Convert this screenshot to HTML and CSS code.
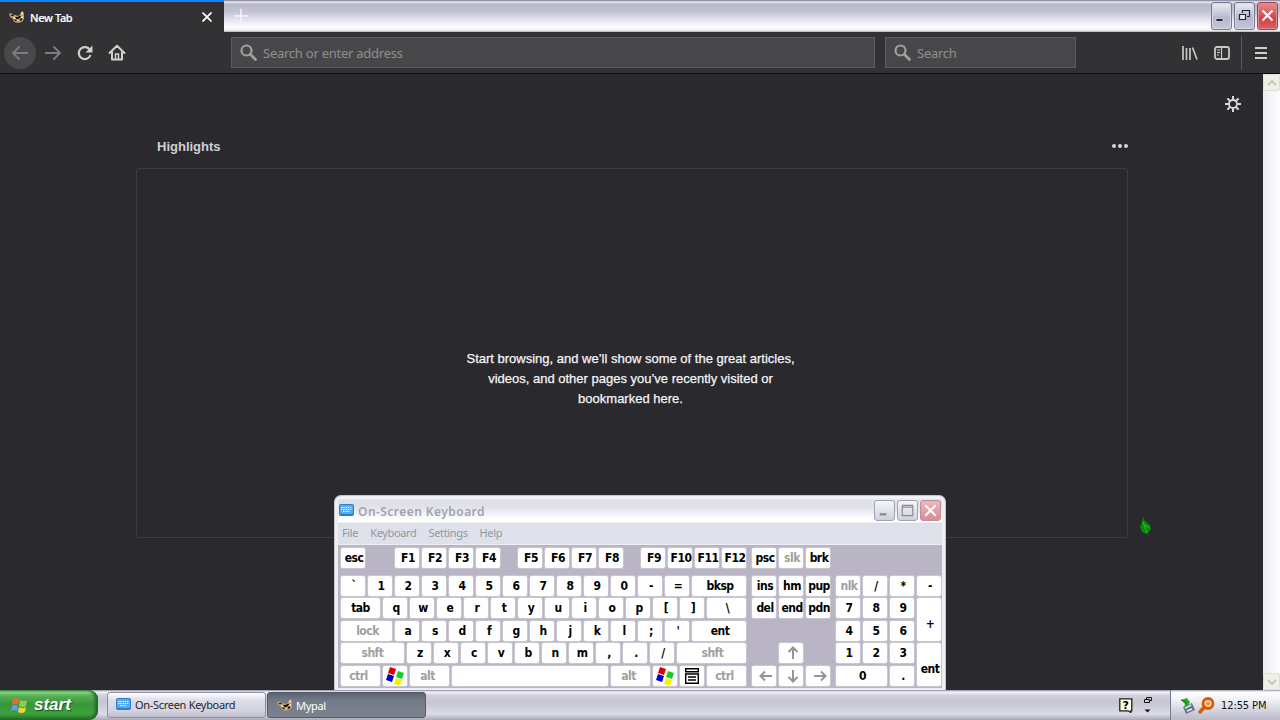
FILE: index.html
```
<!DOCTYPE html>
<html lang="en">

<head>
    <meta charset="UTF-8">
    <meta name="viewport" content="width=device-width, initial-scale=1.0">
    <title>New Tab</title>
    <link rel="stylesheet" href="styles.css">
</head>

<body>
    <!-- shared icons -->
    <svg class="symbols" width="0" height="0">
        <symbol id="winflag" viewBox="0 0 18 18">
            <path fill="#e00000" d="M4 0l6 2-2 6-6-2z"/>
            <path fill="#16d020" d="M12 4l6 2-2 6-6-2z"/>
            <path fill="#0000d0" d="M2 7l6 2-2 6-6-2z"/>
            <path fill="#f8f000" d="M10 11l6 2-2 6-6-2z"/>
        </symbol>
        <symbol id="mypal" viewBox="0 0 16 14">
            <path fill="#b39a68" d="M0 4l2-1 2 2 3 0 1 1 3-1 1-3 2-1 1 3 0 5-2 3-4 1-4-1-1-3-3-2z"/>
            <path fill="#1c120c" d="M2 5l2 0 1 1-3 0zM6 7l3 0 1-1 2 0-1 2-2 1-3 0zM5 9l2 1 1 1-2 0zM11 9l2-1 0 2-2 1z"/>
            <path fill="#f4e8c8" d="M12 3l2-1 0 2-2 1zM4 7l2 0 1 2-2 0zM12 7l2-1 0 2-2 0zM8 10l2 0-1 1.500z"/>
        </symbol>
        <symbol id="kbd" viewBox="0 0 15 12">
            <rect width="15" height="12" rx="2" fill="#2f7fc8"/>
            <rect x="1" y="1" width="13" height="9" rx="1" fill="#58aaea"/>
            <path stroke="#e4f4ff" stroke-dasharray="1.5 .7" d="M2 3.5h11M2 5.5h11M4 7.5h7"/>
        </symbol>
        <symbol id="lens" viewBox="0 0 18 18">
            <circle cx="6.500" cy="6.500" r="5" fill="none" stroke="currentColor" stroke-width="2.200"/>
            <path d="M10.500 10.500l5 5" stroke="currentColor" stroke-width="2.800" stroke-linecap="round"/>
        </symbol>
    </svg>

    <div class="browser">
        <div class="tabbar">
            <div class="tab">
                <svg class="tab-icon" width="16" height="14"><use href="#mypal"/></svg>
                <span class="tab-title">New Tab</span>
                <svg class="tab-close" width="10" height="10" viewBox="0 0 10 10"><path d="M.5.5l9 9M9.500.5l-9 9" stroke="#fff" stroke-width="1.800"/></svg>
            </div>
            <svg class="new-tab" width="14" height="14" viewBox="0 0 14 14"><path d="M7 0v14M0 7h14" stroke="#f4f4fa" stroke-width="1.600"/></svg>
            <div class="caption">
                <div class="cap-btn"><svg width="20" height="26" viewBox="0 0 20 26"><path d="M4 15.500h7v3H4z" fill="#26263a" stroke="#fff" stroke-width=".6"/></svg></div>
                <div class="cap-btn"><svg width="20" height="26" viewBox="0 0 20 26"><path d="M7.500 10V7.500h7v6H12" fill="none" stroke="#26263a" stroke-width="1.200"/><path d="M4.500 11.500h6v5h-6z" fill="#e8e8f2" stroke="#26263a" stroke-width="1.200"/></svg></div>
                <div class="cap-btn close"><svg width="20" height="26" viewBox="0 0 20 26"><path d="M4.500 7.500l10 10M14.500 7.500l-10 10" stroke="#fff" stroke-width="2.200"/></svg></div>
            </div>
        </div>

        <div class="toolbar">
            <div class="back"><svg width="18" height="16" viewBox="0 0 18 16"><path d="M17 8H2M8.500 1.500L2 8l6.500 6.500" fill="none" stroke="#7d7d80" stroke-width="1.800"/></svg></div>
            <svg class="forward" width="18" height="16" viewBox="0 0 18 16"><path d="M1 8h15M9.500 1.500L16 8l-6.500 6.500" fill="none" stroke="#7d7d80" stroke-width="1.800"/></svg>
            <svg class="reload" width="16" height="16" viewBox="0 0 16 16"><path d="M13 5A6 6 0 1 0 13.500 10" fill="none" stroke="#d0d0d0" stroke-width="2.200"/><path d="M15.500.5v7H8.500z" fill="#d0d0d0"/></svg>
            <svg class="home" width="18" height="17" viewBox="0 0 18 17"><path d="M1.500 9L9 1.800 16.500 9M4 8v7.500h10V8" fill="none" stroke="#d0d0d0" stroke-width="2" stroke-linejoin="round" stroke-linecap="round"/><path d="M7.500 15v-5h3v5" fill="none" stroke="#d0d0d0" stroke-width="1.500"/></svg>
            <div class="field address"><svg width="18" height="18"><use href="#lens"/></svg><span>Search or enter address</span></div>
            <div class="field search"><svg width="18" height="18"><use href="#lens"/></svg><span>Search</span></div>
            <div class="tools">
                <svg width="16" height="14" viewBox="0 0 16 14"><path d="M1 0v14M4.500 2v12M8 2v12M10.500 1.500L15 13.500" stroke="#c8c8ca" stroke-width="1.700"/></svg>
                <svg width="16" height="14" viewBox="0 0 16 14"><rect x="1" y="1" width="14" height="12" rx="2" fill="none" stroke="#c8c8ca" stroke-width="1.800"/><path d="M7.500 1v12M3 4h3M3 6.500h3M3 9h2" stroke="#c8c8ca" stroke-width="1.200"/></svg>
                <i class="sep"></i>
                <svg width="12" height="12" viewBox="0 0 12 12"><path d="M0 1h12M0 6h12M0 11h12" stroke="#d0d0d0" stroke-width="1.800"/></svg>
            </div>
        </div>

        <div class="content">
            <div class="page">
                <svg class="gear" width="16" height="16" viewBox="0 0 16 16"><circle cx="8" cy="8" r="4" fill="none" stroke="#dcdcde" stroke-width="1.800"/><path d="M8 0v3.500M8 12.500V16M0 8h3.500M12.500 8H16M2.400 2.400l2.400 2.400M11.200 11.200l2.400 2.400M13.600 2.400l-2.400 2.400M4.800 11.200l-2.400 2.400" stroke="#dcdcde" stroke-width="2"/></svg>
                <div class="section-head">
                    <h3>Highlights</h3>
                    <svg width="16" height="4" viewBox="0 0 16 4"><g fill="#d7d7db"><circle cx="2" cy="2" r="2"/><circle cx="8" cy="2" r="2"/><circle cx="14" cy="2" r="2"/></g></svg>
                </div>
                <div class="empty">
                    <p>Start browsing, and we’ll show some of the great articles,<br>videos, and other pages you’ve recently visited or<br>bookmarked here.</p>
                </div>
            </div>
            <div class="scrollbar">
                <div class="scroll-btn"><svg width="10" height="6" viewBox="0 0 10 6"><path d="M1 5l4-4 4 4" fill="none" stroke="#c6c6ba" stroke-width="2"/></svg></div>
                <div class="scroll-btn"><svg width="10" height="6" viewBox="0 0 10 6"><path d="M1 1l4 4 4-4" fill="none" stroke="#c6c6ba" stroke-width="2"/></svg></div>
            </div>
        </div>
    </div>

    <div class="osk">
        <div class="osk-title">
            <svg width="15" height="12"><use href="#kbd"/></svg>
            <span>On-Screen Keyboard</span>
            <div class="osk-btns">
                <div class="osk-btn"><svg width="19" height="19" viewBox="0 0 20 20"><path d="M5 14h7" stroke="#8c8c96" stroke-width="2.500"/></svg></div>
                <div class="osk-btn"><svg width="19" height="19" viewBox="0 0 20 20"><path d="M4.500 4.500h11v11h-11zM4 6.500h12" fill="none" stroke="#8c8c96" stroke-width="1.300"/></svg></div>
                <div class="osk-btn close"><svg width="19" height="19" viewBox="0 0 20 20"><path d="M4.500 4.500l11 11M15.500 4.500l-11 11" stroke="#fff" stroke-width="2"/></svg></div>
            </div>
        </div>
        <div class="osk-menu"><span>File</span><span>Keyboard</span><span>Settings</span><span>Help</span></div>
        <div class="keys">
            <div class="row fn-row">
                <b class="key esc">esc</b>
                <div class="row group"><b class="key">F1</b><b class="key">F2</b><b class="key">F3</b><b class="key">F4</b></div>
                <div class="row group"><b class="key">F5</b><b class="key">F6</b><b class="key">F7</b><b class="key">F8</b></div>
                <div class="row group"><b class="key">F9</b><b class="key">F10</b><b class="key">F11</b><b class="key">F12</b></div>
                <div class="row sys"><b class="key">psc</b><b class="key off">slk</b><b class="key">brk</b></div>
            </div>
            <div class="blocks">
                <div class="main">
                    <div class="row"><b class="key">`</b><b class="key">1</b><b class="key">2</b><b class="key">3</b><b class="key">4</b><b class="key">5</b><b class="key">6</b><b class="key">7</b><b class="key">8</b><b class="key">9</b><b class="key">0</b><b class="key">-</b><b class="key">=</b><b class="key fill">bksp</b></div>
                    <div class="row"><b class="key w39">tab</b><b class="key">q</b><b class="key">w</b><b class="key">e</b><b class="key">r</b><b class="key">t</b><b class="key">y</b><b class="key">u</b><b class="key">i</b><b class="key">o</b><b class="key">p</b><b class="key">[</b><b class="key">]</b><b class="key fill">\</b></div>
                    <div class="row"><b class="key w51 off">lock</b><b class="key">a</b><b class="key">s</b><b class="key">d</b><b class="key">f</b><b class="key">g</b><b class="key">h</b><b class="key">j</b><b class="key">k</b><b class="key">l</b><b class="key">;</b><b class="key">'</b><b class="key fill">ent</b></div>
                    <div class="row"><b class="key w63 off">shft</b><b class="key">z</b><b class="key">x</b><b class="key">c</b><b class="key">v</b><b class="key">b</b><b class="key">n</b><b class="key">m</b><b class="key">,</b><b class="key">.</b><b class="key">/</b><b class="key fill off">shft</b></div>
                    <div class="row"><b class="key w39 off mod">ctrl</b><b class="key icon"><svg width="18" height="18"><use href="#winflag"/></svg></b><b class="key w39 off mod">alt</b><b class="key fill"></b><b class="key w39 off mod">alt</b><b class="key icon"><svg width="18" height="18"><use href="#winflag"/></svg></b><b class="key icon"><svg width="14" height="16" viewBox="0 0 14 16"><path d="M.7.7h12.600v3H.7zM.7 6h12.600v9.300H.7zM3 9h8M3 12h8" fill="none" stroke="#000" stroke-width="1.400"/></svg></b><b class="key w39 off mod">ctrl</b></div>
                </div>
                <div class="nav">
                    <b class="key">ins</b><b class="key">hm</b><b class="key">pup</b>
                    <b class="key">del</b><b class="key">end</b><b class="key">pdn</b>
                    <b class="key up off"><svg width="12" height="14" viewBox="0 0 12 14"><path d="M6 13V2M1.500 6L6 1.500 10.500 6" fill="none" stroke="#949494" stroke-width="2"/></svg></b>
                    <b class="key left off"><svg width="14" height="12" viewBox="0 0 14 12"><path d="M13 6H2M6 1.500L1.500 6 6 10.500" fill="none" stroke="#949494" stroke-width="2"/></svg></b>
                    <b class="key down off"><svg width="12" height="14" viewBox="0 0 12 14"><path d="M6 1v11M1.500 8L6 12.500 10.500 8" fill="none" stroke="#949494" stroke-width="2"/></svg></b>
                    <b class="key right off"><svg width="14" height="12" viewBox="0 0 14 12"><path d="M1 6h11M8 1.500L12.500 6 8 10.500" fill="none" stroke="#949494" stroke-width="2"/></svg></b>
                </div>
                <div class="numpad">
                    <b class="key off">nlk</b><b class="key">/</b><b class="key">*</b><b class="key">-</b>
                    <b class="key">7</b><b class="key">8</b><b class="key">9</b><b class="key tall">+</b>
                    <b class="key">4</b><b class="key">5</b><b class="key">6</b>
                    <b class="key">1</b><b class="key">2</b><b class="key">3</b><b class="key tall">ent</b>
                    <b class="key zero">0</b><b class="key">.</b>
                </div>
            </div>
        </div>
    </div>

    <div class="taskbar">
        <div class="start">
            <svg width="18" height="18" viewBox="0 0 18 18"><path fill="#e8693a" d="M3 3q3-2 6 0l-1 6q-3-2-6 0z"/><path fill="#8fd04a" d="M10 4q3 2 7 0l-1 6q-4 2-7 0z"/><path fill="#5f9ff0" d="M2 10q3-2 6 0l-1 5q-3-2-6 0z"/><path fill="#f6d03c" d="M9 11q3 2 7 0l-1 5q-4 2-7 0z"/></svg>
            <span>start</span>
        </div>
        <div class="task"><svg width="15" height="12"><use href="#kbd"/></svg><span>On-Screen Keyboard</span></div>
        <div class="task active"><svg width="16" height="14"><use href="#mypal"/></svg><span>Mypal</span></div>
        <div class="lang">
            <svg width="14" height="15" viewBox="0 0 14 15"><path d="M.8.800h12v12h-1v1.700l-2.500-1.700H.8z" fill="#ffffe4" stroke="#1c1c1c" stroke-width="1.300"/><text class="qmark" x="3.500" y="11">?</text></svg>
            <svg width="10" height="18" viewBox="0 0 10 18"><path d="M3.500 3V1.500h5v3h-2M1.500 3.500h5v3h-5z" fill="none" stroke="#111"/><path d="M1.500 13.500h6l-3 3z" fill="#111"/></svg>
        </div>
        <div class="tray">
            <svg width="16" height="17" viewBox="0 0 16 17"><path d="M3 10l9-4 3 7-9 4z" fill="#68788a"/><path d="M5 11l6-3M7 14l5-2" stroke="#dfe8ee" stroke-width="1.500"/><path d="M1 3l6-2 3 4-2 4-4 1 1-3z" fill="#26ae2c"/><path d="M1 3l4 1 2 4" fill="none" stroke="#107418"/></svg>
            <svg width="17" height="17" viewBox="0 0 17 17"><circle cx="10" cy="6.500" r="5" fill="#f8dcb8" stroke="#d65a08" stroke-width="2.800"/><path d="M6.500 10L2 15" stroke="#d65a08" stroke-width="3.400" stroke-linecap="round"/><circle cx="10" cy="6.500" r="2" fill="#ef9338"/></svg>
            <span>12:55 PM</span>
        </div>
    </div>

    <svg class="cursor" width="14" height="19" viewBox="0 0 14 19"><path d="M4 0l2 4 5 4 1 4-3 4-2 1-4-2-2-5 2-5z" fill="#08890c"/><path d="M4 5l2 5 2 6M6 8l4 3" stroke="#29c42c" fill="none"/><path d="M7 16l3 2" stroke="#5a3515"/></svg>
</body>

</html>
```
FILE: styles.css
```
/* Base Styles */
* {
    box-sizing: border-box;
}

body {
    margin: 0;
    width: 1280px;
    height: 720px;
    overflow: hidden;
    display: flex;
    flex-direction: column;
    background: #2a292e;
    font-family: "DejaVu Sans Condensed", "DejaVu Sans", sans-serif;
    font-size: 11px;
}

svg {
    display: block;
    flex: none;
}

.symbols {
    position: absolute;
}

/* Browser */
.browser {
    height: 690px;
    display: flex;
    flex-direction: column;
}

.tabbar {
    height: 32px;
    display: flex;
    background: linear-gradient(#77758f 0, #eeeef6 2px, #b9b8cc 4px, #c4c3d5 12px, #e4e4ee 20px, #fcfcff 27px, #f4f4f6 30px, #b4b4b8 32px);
}

.tab {
    width: 224px;
    display: flex;
    align-items: center;
    padding: 0 12px 0 9px;
    background: #323234;
    border-top: 2px solid #0a84ff;
    color: #fff;
}

.tab-title {
    flex: 1;
    margin-left: 5px;
    font-family: "Noto Sans", sans-serif;
    font-size: 11px;
    font-weight: 500;
    letter-spacing: -0.35px;
    -webkit-text-stroke: 0.2px #fff;
}

.new-tab {
    margin: 9px 0 0 10px;
}

.caption {
    margin-left: auto;
    padding: 2px 2px 0 0;
    display: flex;
    gap: 2px;
}

.cap-btn {
    width: 21px;
    height: 28px;
    border: 1px solid #77778f;
    border-radius: 3px;
    background: linear-gradient(#ececf5, #b5b5ca 60%, #c8c8da);
    box-shadow: inset 0 0 0 1px #d9d9e6;
}

.cap-btn.close {
    border-color: #a04450;
    background: linear-gradient(#e98f90, #cf4148 60%, #dc6064);
    box-shadow: inset 0 0 0 1px #e18d90;
}

.toolbar {
    height: 42px;
    display: flex;
    align-items: center;
    padding-left: 4px;
    background: #323234;
    border-bottom: 1px solid #0d0d0e;
}

.back {
    width: 32px;
    height: 32px;
    border-radius: 50%;
    background: #49494b;
    display: flex;
    align-items: center;
    justify-content: center;
}

.forward {
    margin-left: 8px;
}

.reload {
    margin-left: 15px;
}

.home {
    margin-left: 15px;
}

.field {
    height: 31px;
    display: flex;
    align-items: center;
    padding-left: 8px;
    border: 1px solid #5d5d60;
    background: #474749;
    color: #8f8f92;
    font-family: "Noto Sans", sans-serif;
    font-size: 13px;
}

.field svg {
    color: #a0a0a2;
}

.field span {
    margin-left: 5px;
    letter-spacing: -0.25px;
}

.address {
    width: 644px;
    margin-left: 105px;
}

.search {
    width: 191px;
    margin-left: 10px;
}

.tools {
    margin-left: auto;
    padding-right: 13px;
    display: flex;
    align-items: center;
    gap: 16px;
}

.sep {
    width: 1px;
    height: 34px;
    margin: 0 -3px 0 -5px;
    background: #59595c;
}

.content {
    flex: 1;
    display: flex;
}

.page {
    flex: 1;
    background: #2a292e;
    padding: 22px 22px 0 136px;
}

.gear {
    margin-left: auto;
}

.section-head {
    display: flex;
    align-items: center;
    justify-content: space-between;
    width: 992px;
    height: 20px;
    margin-top: 24px;
    padding-left: 21px;
}

.section-head h3 {
    margin: 0;
    font: bold 13px "Liberation Sans", Arial, sans-serif;
    color: #cfcfd3;
}

.empty {
    width: 992px;
    height: 370px;
    margin-top: 12px;
    padding-top: 180px;
    border: 1px solid #3c3b40;
    border-radius: 3px;
}

.empty p {
    margin: 0;
    padding-right: 3px;
    text-align: center;
    font: 13px/20px "Liberation Sans", Arial, sans-serif;
    color: #f4f4f6;
    -webkit-text-stroke: 0.25px #f4f4f6;
}

.scrollbar {
    width: 17px;
    display: flex;
    flex-direction: column;
    justify-content: space-between;
    background: linear-gradient(90deg, #eeeef2, #fdfdff);
}

.scroll-btn {
    height: 17px;
    display: flex;
    align-items: center;
    justify-content: center;
    background: #f0f0e8;
    border: 1px solid #dedfd4;
    border-radius: 2px;
}

/* On-Screen Keyboard */
.osk {
    position: absolute;
    left: 334px;
    top: 495px;
    width: 612px;
    height: 195px;
    padding: 1px 3px 3px;
    border: 1px solid #c5c4d2;
    border-bottom: 0;
    border-radius: 7px 7px 0 0;
    background: #eeeef5;
}

.osk-title {
    height: 27px;
    display: flex;
    align-items: center;
    padding: 0 0 1px 1px;
    background: linear-gradient(#f8f8fc 0, #dcdde6 4px, #e2e3eb 11px, #f1f2f6 17px, #fff 22px, #fff 25px, #cfd0da 27px);
    color: #a2a2aa;
}

.osk-title span {
    margin: 2px 0 0 4px;
    font-family: "Noto Sans", sans-serif;
    font-weight: 600;
    font-size: 12px;
    letter-spacing: 0.45px;
}

.osk-btns {
    margin-left: auto;
    margin-right: 1px;
    display: flex;
    gap: 2px;
}

.osk-btn {
    width: 21px;
    height: 21px;
    border: 1px solid #a2a3b2;
    border-radius: 3px;
    background: linear-gradient(#f6f6fa, #cfd0db);
}

.osk-btn.close {
    border-color: #c58c98;
    background: linear-gradient(#e7bac0, #d78f98);
}

.osk-menu {
    height: 21px;
    display: flex;
    align-items: center;
    gap: 12px;
    padding: 0 0 3px 4px;
    background: #dfe1ea;
    border-bottom: 1px solid #eeeef4;
    color: #96969e;
    font-family: "Noto Sans", sans-serif;
    font-size: 11px;
    letter-spacing: -0.35px;
}

.keys {
    height: 143px;
    padding: 3px 0 0 3px;
    background: #b9b5c5;
}

.row {
    display: flex;
    gap: 3px;
}

.key {
    flex: none;
    width: 24px;
    height: 20px;
    display: flex;
    align-items: center;
    justify-content: center;
    overflow: hidden;
    border-radius: 2px;
    background: #fff;
    box-shadow: 0 0 0 1px #c9c6d2;
    color: #000;
    font-size: 12px;
    letter-spacing: -0.5px;
    line-height: 20px;
    padding-left: 2px;
}

.key.off {
    color: #a0a0a0;
}

.key.icon {
    padding: 0;
}

.key.fill {
    flex: 1;
}

.key.mod {
    padding: 0 4px 0 0;
}

.w39 {
    width: 39px;
}

.w51 {
    width: 51px;
}

.w63 {
    width: 63px;
}

.key.w39,
.key.w63 {
    padding-left: 0;
}

.fn-row {
    gap: 18px;
    margin-bottom: 8px;
}

.esc {
    margin-right: 12px;
}

.sys {
    margin-left: -12px;
}

.blocks {
    display: flex;
    gap: 6px;
}

.main {
    flex: none;
    width: 405px;
}

/* the rows sit 22 and 23 pixels apart by turns */
.main,
.nav,
.numpad {
    display: grid;
    grid-template-rows: 22px 23px 22px 23px 20px;
}

.nav {
    grid-template-columns: repeat(3, 24px);
    column-gap: 3px;
}

.nav .up {
    grid-area: 4 / 2;
}

.nav .left {
    grid-area: 5 / 1;
}

.nav .down {
    grid-area: 5 / 2;
}

.nav .right {
    grid-area: 5 / 3;
}

.nav .off {
    padding-left: 4px;
}

.numpad {
    grid-template-columns: repeat(4, 24px);
    column-gap: 3px;
}

.tall {
    height: 43px;
    grid-row: span 2;
    grid-column: 4;
    padding-top: 9px;
}

.zero {
    width: 51px;
    grid-column: span 2;
}

/* Taskbar */
.taskbar {
    height: 30px;
    display: flex;
    background: linear-gradient(#88889a 0, #f5f5fa 2px, #d2d2de 5px, #c5c5d3 12px, #dcdce6 24px, #a8a8b8 30px);
}

.start {
    width: 98px;
    display: flex;
    align-items: center;
    padding-left: 10px;
    border-radius: 0 9px 9px 0;
    background: linear-gradient(#3a8a3e 0, #8fd68b 2px, #55af53 6px, #38963a 14px, #3da13d 24px, #1d6b24 30px);
    box-shadow: inset -3px 0 3px #1e6b25;
    color: #fff;
}

.start span {
    margin: -1px 0 0 6px;
    font: italic bold 17px "Liberation Sans", Arial, sans-serif;
    text-shadow: 1px 1px 1px #1c5420;
}

.task {
    width: 159px;
    height: 26px;
    margin: 2px 1px 0 0;
    display: flex;
    align-items: center;
    padding: 0 0 2px 8px;
    border: 1px solid #8e8ea2;
    border-radius: 3px;
    background: linear-gradient(#fff, #dedee9 30%, #d3d3e0 75%, #bcbccb);
    color: #26262c;
}

.start + .task {
    margin-left: 9px;
}

.task span {
    margin-left: 4px;
    font-family: "Noto Sans", sans-serif;
    letter-spacing: -0.3px;
}

.task.active {
    padding: 0 0 0 9px;
    background: linear-gradient(#5a6170, #737a87 30%, #7c838f);
    border-color: #555a68;
    color: #fff;
}

.task.active span {
    margin-left: 3px;
}

.lang {
    margin-left: auto;
    display: flex;
    align-items: center;
    gap: 10px;
    padding-right: 17px;
}

.qmark {
    font: bold 11px "DejaVu Sans", sans-serif;
}

.tray {
    width: 110px;
    display: flex;
    align-items: center;
    gap: 2px;
    padding-left: 9px;
    border-left: 1px solid #77778c;
    background: linear-gradient(#9898aa 0, #fff 2px, #f0f0f6 10px, #d5d5e0 20px, #b9b9ca 30px);
    color: #111;
}

.tray span {
    margin-left: 4px;
    font-size: 11px;
    letter-spacing: -0.1px;
}

.cursor {
    position: absolute;
    left: 1139px;
    top: 517px;
}
```
